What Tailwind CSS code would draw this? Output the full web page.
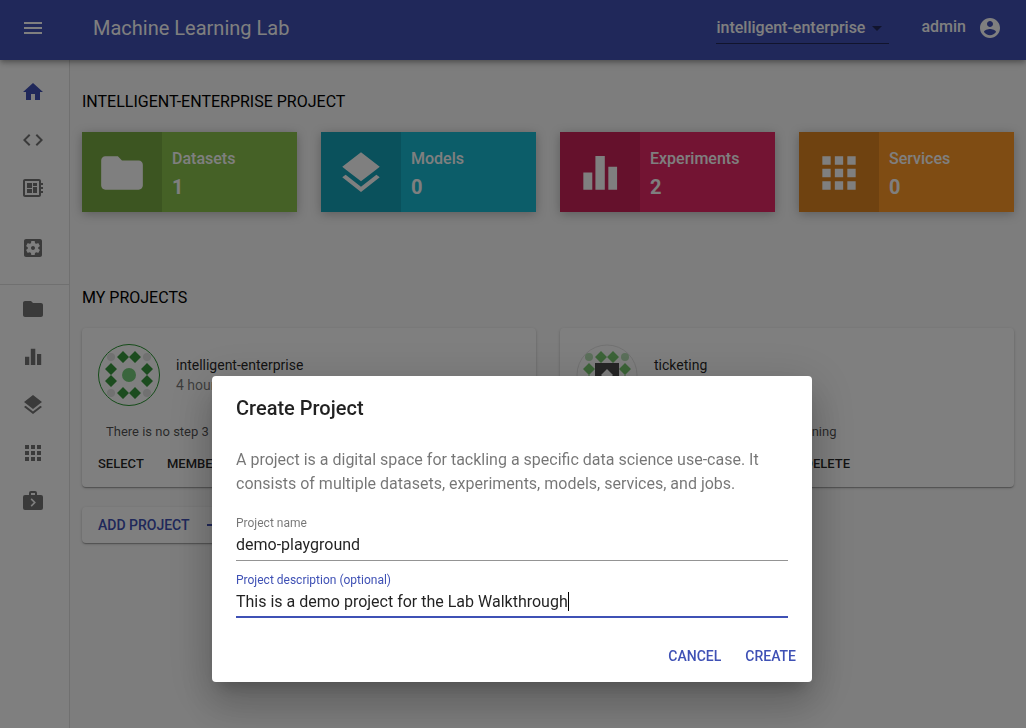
<!DOCTYPE html>
<html lang="en">
<head>
<meta charset="utf-8">
<meta name="viewport" content="width=device-width, initial-scale=1">
<title>Machine Learning Lab</title>
<script src="https://cdn.jsdelivr.net/npm/@tailwindcss/browser@4"></script>
</head>
<body class="h-screen overflow-hidden bg-[#fafafa] font-[Roboto,sans-serif] text-black">
<svg class="hidden" aria-hidden="true">
  <symbol id="folder" viewBox="0 0 24 24"><path d="M10 4H4c-1.1 0-1.99.9-1.99 2L2 18c0 1.1.9 2 2 2h16c1.1 0 2-.9 2-2V8c0-1.1-.9-2-2-2h-8l-2-2z"/></symbol>
  <symbol id="layers" viewBox="0 0 24 24"><path d="M11.99 18.54l-7.37-5.73L3 14.07l9 7 9-7-1.63-1.27-7.38 5.74zM12 16l7.36-5.73L21 9l-9-7-9 7 1.63 1.27L12 16z"/></symbol>
  <symbol id="chart" viewBox="0 0 24 24"><path d="M4 11.800h4.300v8.200H4zM9.800 3.800h4.500V20H9.800zM16 9h4.200v11H16z"/></symbol>
  <symbol id="apps" viewBox="0 0 24 24"><path d="M4 8h4V4H4v4zm6 12h4v-4h-4v4zm-6 0h4v-4H4v4zm0-6h4v-4H4v4zm6 0h4v-4h-4v4zm6-10v4h4V4h-4zm-6 4h4V4h-4v4zm6 6h4v-4h-4v4zm0 6h4v-4h-4v4z"/></symbol>
</svg>

<div class="flex h-full flex-col">
  <header class="relative z-10 flex h-15 shrink-0 items-center bg-[#4050b4] pr-6 pl-[21px] text-white shadow-[0_2px_4px_-1px_rgba(0,0,0,0.2),0_4px_5px_0_rgba(0,0,0,0.14),0_1px_10px_0_rgba(0,0,0,0.12)]">
    <button type="button" aria-label="Menu" class="mb-1"><svg class="size-6 fill-current" viewBox="0 0 24 24"><path d="M3 18h18v-2H3v2zm0-5h18v-2H3v2zm0-7v2h18V6H3z"/></svg></button>
    <h1 class="mb-1 ml-12 text-xl">Machine Learning Lab</h1>
    <div class="relative mr-8 mb-1.5 ml-auto flex w-[173px] items-center border-b border-[#22295b]">
      <select aria-label="Project" class="h-8 w-full appearance-none bg-transparent pt-0.5 font-medium outline-none"><option>intelligent-enterprise</option></select>
      <svg class="pointer-events-none absolute right-0 bottom-[3px] size-6 fill-[#22295b]" viewBox="0 0 24 24"><path d="M7 10l5 5 5-5z"/></svg>
    </div>
    <span class="mr-3 mb-1.5 font-medium">admin</span>
    <button type="button" aria-label="Account" class="mb-1"><svg class="size-6 fill-current" viewBox="0 0 24 24"><path d="M12 2C6.480 2 2 6.480 2 12s4.480 10 10 10 10-4.480 10-10S17.520 2 12 2zm0 3c1.660 0 3 1.340 3 3s-1.340 3-3 3-3-1.340-3-3 1.340-3 3-3zm0 14.200c-2.500 0-4.710-1.280-6-3.220.030-1.990 4-3.080 6-3.080 1.990 0 5.970 1.090 6 3.080-1.290 1.940-3.500 3.220-6 3.220z"/></svg></button>
  </header>

  <div class="flex min-h-0 flex-1">
    <nav aria-label="Main" class="w-[70px] shrink-0 border-r border-[#e0e0e0] bg-white pt-2 text-[#757575]">
      <a href="#" aria-label="Home" class="flex h-12 items-center pl-[21px] text-[#4050b4]"><svg class="size-6 fill-current" viewBox="0 0 24 24"><path d="M10 20v-6h4v6h5v-8h3L12 3 2 12h3v8z"/></svg></a>
      <a href="#" aria-label="Workspace" class="flex h-12 items-center pl-[21px]"><svg class="size-6 fill-current" viewBox="0 0 24 24"><path d="M9.400 16.600L4.800 12l4.600-4.600L8 6l-6 6 6 6 1.400-1.400zm5.200 0l4.600-4.600-4.600-4.600L16 6l6 6-6 6-1.400-1.400z"/></svg></a>
      <a href="#" aria-label="Hardware" class="flex h-12 items-center pl-[21px]"><svg class="size-6 fill-current" viewBox="0 0 24 24"><path d="M22 9V7h-2V5c0-1.100-.900-2-2-2H4c-1.100 0-2 .900-2 2v14c0 1.100.900 2 2 2h14c1.100 0 2-.900 2-2v-2h2v-2h-2v-2h2v-2h-2V9h2zm-4 10H4V5h14v14zM6 13h5v4H6zm6-6h4v3h-4zM6 7h5v5H6zm6 4h4v6h-4z"/></svg></a>
      <a href="#" aria-label="Settings" class="mt-3 flex h-12 items-center pl-[21px]"><svg class="size-6 fill-current" viewBox="0 0 24 24"><path d="M12 10c-1.100 0-2 .900-2 2s.900 2 2 2 2-.900 2-2-.900-2-2-2zm7-7H5c-1.110 0-2 .900-2 2v14c0 1.100.890 2 2 2h14c1.110 0 2-.900 2-2V5c0-1.100-.890-2-2-2zm-1.750 9c0 .230-.020.460-.050.680l1.480 1.160c.130.110.170.300.080.450l-1.400 2.420c-.090.150-.270.210-.430.150l-1.740-.700c-.360.280-.760.510-1.180.690l-.260 1.850c-.030.170-.180.300-.350.300h-2.800c-.170 0-.320-.130-.350-.290l-.260-1.850c-.430-.180-.820-.410-1.180-.690l-1.740.700c-.160.060-.340 0-.430-.150l-1.400-2.420c-.090-.150-.050-.340.080-.450l1.480-1.160c-.030-.230-.050-.460-.050-.690 0-.230.020-.460.050-.680l-1.480-1.160c-.130-.110-.170-.300-.080-.450l1.400-2.420c.090-.150.270-.210.430-.150l1.740.700c.360-.280.760-.510 1.180-.690l.260-1.850c.030-.170.180-.300.350-.300h2.800c.170 0 .320.130.350.290l.260 1.850c.430.180.820.410 1.180.690l1.740-.700c.160-.060.340 0 .430.150l1.400 2.420c.090.150.050.340-.080.450l-1.480 1.160c.030.230.050.460.050.690z"/></svg></a>
      <hr class="mt-3 border-[#e0e0e0]">
      <a href="#" aria-label="Datasets" class="flex h-12 items-center pl-[21px]"><svg class="size-6 fill-current"><use href="#folder"/></svg></a>
      <a href="#" aria-label="Experiments" class="flex h-12 items-center pl-[21px]"><svg class="size-6 fill-current"><use href="#chart"/></svg></a>
      <a href="#" aria-label="Models" class="flex h-12 items-center pl-[21px]"><svg class="size-6 fill-current"><use href="#layers"/></svg></a>
      <a href="#" aria-label="Services" class="flex h-12 items-center pl-[21px]"><svg class="size-6 fill-current"><use href="#apps"/></svg></a>
      <a href="#" aria-label="Jobs" class="flex h-12 items-center pl-[21px]"><svg class="size-6 fill-current" viewBox="0 0 24 24"><path fill-rule="evenodd" d="M10 2h4a2 2 0 0 1 2 2v2h4a2 2 0 0 1 2 2v11a2 2 0 0 1-2 2H4a2 2 0 0 1-2-2V8a2 2 0 0 1 2-2h4V4a2 2 0 0 1 2-2zm0 2v2h4V4zm.700 5.300L9.600 10.400l3.100 3.100-3.100 3.100 1.100 1.100 4.200-4.200z"/></svg></a>
    </nav>

    <main class="min-w-0 flex-1 px-3 pt-[30px]">
      <h2>INTELLIGENT-ENTERPRISE PROJECT</h2>
      <div class="mt-[18px] grid grid-cols-4 gap-6 text-white">
        <a href="#" class="flex h-20 bg-[#8ac34c] shadow-[0_2px_10px_rgba(0,0,0,0.26)]">
          <span class="flex w-20 items-center justify-center bg-black/12 pt-0.5"><svg class="size-[50px] fill-current"><use href="#folder"/></svg></span>
          <span class="flex flex-col px-[10px] pt-[15px]"><span class="font-medium">Datasets</span><span class="mt-0.5 text-xl font-bold">1</span></span>
        </a>
        <a href="#" class="flex h-20 bg-[#18bad2] shadow-[0_2px_10px_rgba(0,0,0,0.26)]">
          <span class="flex w-20 items-center justify-center bg-black/12 pt-0.5"><svg class="size-[50px] fill-current"><use href="#layers"/></svg></span>
          <span class="flex flex-col px-[10px] pt-[15px]"><span class="font-medium">Models</span><span class="mt-0.5 text-xl font-bold">0</span></span>
        </a>
        <a href="#" class="flex h-20 bg-[#e62866] shadow-[0_2px_10px_rgba(0,0,0,0.26)]">
          <span class="flex w-20 items-center justify-center bg-black/12 pt-0.5"><svg class="size-[50px] fill-current"><use href="#chart"/></svg></span>
          <span class="flex flex-col px-[10px] pt-[15px]"><span class="font-medium">Experiments</span><span class="mt-0.5 text-xl font-bold">2</span></span>
        </a>
        <a href="#" class="flex h-20 bg-[#fe9826] shadow-[0_2px_10px_rgba(0,0,0,0.26)]">
          <span class="flex w-20 items-center justify-center bg-black/12 pt-0.5"><svg class="size-[50px] fill-current"><use href="#apps"/></svg></span>
          <span class="flex flex-col px-[10px] pt-[15px]"><span class="font-medium">Services</span><span class="mt-0.5 text-xl font-bold">0</span></span>
        </a>
      </div>

      <h2 class="mt-[74px]">MY PROJECTS</h2>
      <div class="mt-[18px] grid grid-cols-2 gap-6">
        <article class="rounded bg-white pb-[7px] shadow-[0_1px_3px_0_rgba(0,0,0,0.2),0_1px_1px_0_rgba(0,0,0,0.14),0_2px_1px_-1px_rgba(0,0,0,0.12)]">
          <div class="flex items-center gap-4 p-4">
            <svg class="size-[62px] shrink-0" viewBox="0 0 62 62">
              <circle cx="31" cy="31" r="30.500" fill="none" stroke="#2a9632"/>
              <g fill="#e2e2e2"><circle cx="13" cy="13" r="4"/><circle cx="49" cy="13" r="4"/><circle cx="13" cy="49" r="4"/><circle cx="49" cy="49" r="4"/></g>
              <path fill="#38983e" d="M25 7l6 6-6 6-6-6zM37 7l6 6-6 6-6-6zM25 43l6 6-6 6-6-6zM37 43l6 6-6 6-6-6zM13 19l6 6-6 6-6-6zM13 31l6 6-6 6-6-6zM49 19l6 6-6 6-6-6zM49 31l6 6-6 6-6-6z"/>
              <circle cx="31" cy="31" r="7" fill="#74cc7a"/>
            </svg>
            <div class="text-sm"><h3 class="text-black/87">intelligent-enterprise</h3><p class="text-black/54">4 hours ago</p></div>
          </div>
          <p class="px-6 text-[13px] leading-5 text-black/70">There is no step 3</p>
          <div class="mt-1.5 flex gap-2 px-2 text-[13px] font-medium text-black/87">
            <button type="button" class="h-8 min-w-16 px-2 text-left">SELECT</button><button type="button" class="h-8 min-w-16 px-[5px]">MEMBERS</button>
          </div>
        </article>
        <article class="rounded bg-white pb-[7px] shadow-[0_1px_3px_0_rgba(0,0,0,0.2),0_1px_1px_0_rgba(0,0,0,0.14),0_2px_1px_-1px_rgba(0,0,0,0.12)]">
          <div class="flex items-center gap-4 p-4">
            <svg class="size-[62px] shrink-0" viewBox="0 0 62 62">
              <circle cx="31" cy="31" r="30" fill="none" stroke="#e4e4e4"/>
              <g fill="#b8e0b6"><circle cx="13" cy="13" r="4"/><circle cx="49" cy="13" r="4"/><circle cx="13" cy="49" r="4"/><circle cx="49" cy="49" r="4"/></g>
              <path fill="#78c870" d="M25 7l6 6-6 6-6-6zM37 7l6 6-6 6-6-6zM25 43l6 6-6 6-6-6zM37 43l6 6-6 6-6-6zM13 19l6 6-6 6-6-6zM13 31l6 6-6 6-6-6zM49 19l6 6-6 6-6-6zM49 31l6 6-6 6-6-6z"/>
              <path fill="#4c4c4c" fill-rule="evenodd" d="M19 19h24v24H19zM31 25l-6 6 6 6 6-6z"/>
            </svg>
            <div class="text-sm"><h3 class="text-black/87">ticketing</h3><p class="text-black/54">4 hours ago</p></div>
          </div>
          <p class="px-6 text-[13px] leading-5 text-black/70">Ticket classification using machine learning</p>
          <div class="mt-1.5 flex w-[303px] justify-end px-2 text-[13px] font-medium text-black/87">
            <button type="button" class="h-8 px-[5px]">DELETE</button>
          </div>
        </article>
      </div>
      <button type="button" class="mt-5 flex h-9 items-center gap-3 rounded bg-white px-4 text-sm font-medium text-[#4050b4] shadow-[0_1px_3px_0_rgba(0,0,0,0.2),0_1px_1px_0_rgba(0,0,0,0.14),0_2px_1px_-1px_rgba(0,0,0,0.12)]">ADD PROJECT
        <svg class="size-6 fill-current" viewBox="0 0 24 24"><path d="M19 13h-6v6h-2v-6H5v-2h6V5h2v6h6v2z"/></svg>
      </button>
    </main>
  </div>
</div>

<div class="fixed inset-0 z-20 flex items-start justify-center overflow-hidden bg-black/50 pt-94 pr-0.5">
  <form role="dialog" aria-modal="true" aria-labelledby="dialog-title" class="w-full max-w-[600px] rounded bg-white text-black/87 shadow-[0_11px_15px_-7px_rgba(0,0,0,0.2),0_24px_38px_3px_rgba(0,0,0,0.14),0_9px_46px_8px_rgba(0,0,0,0.12)]">
    <h2 id="dialog-title" class="px-6 py-4 text-xl leading-8 font-medium">Create Project</h2>
    <div class="px-6 pt-2">
      <p class="text-black/54">A project is a digital space for tackling a specific data science use-case. It consists of multiple datasets, experiments, models, services, and jobs.</p>
      <div class="mt-[17px]">
        <label for="name" class="block h-4 text-xs leading-5 text-black/54">Project name</label>
        <div class="flex h-8 border-b border-black/42 pt-1.5">
          <input id="name" type="text" value="demo-playground" class="h-5 w-full bg-transparent outline-none">
        </div>
      </div>
      <div class="mt-[9px]">
        <label for="description" class="block h-4 text-xs leading-5 text-[#3f51b5]">Project description (optional)</label>
        <div class="flex h-8 border-b-2 border-[#3f51b5] pt-1.5">
          <input id="description" type="text" value="This is a demo project for the Lab Walkthrough" class="field-sizing-content h-5 bg-transparent outline-none">
          <span class="h-[19px] w-px bg-black"></span>
        </div>
      </div>
    </div>
    <div class="mt-5 flex justify-end gap-2 px-2 pb-2 text-sm font-medium text-[#3f51b5]">
      <button type="button" class="h-9 min-w-16 px-2">CANCEL</button>
      <button type="submit" class="h-9 min-w-16 px-2">CREATE</button>
    </div>
  </form>
</div>
</body>
</html>
